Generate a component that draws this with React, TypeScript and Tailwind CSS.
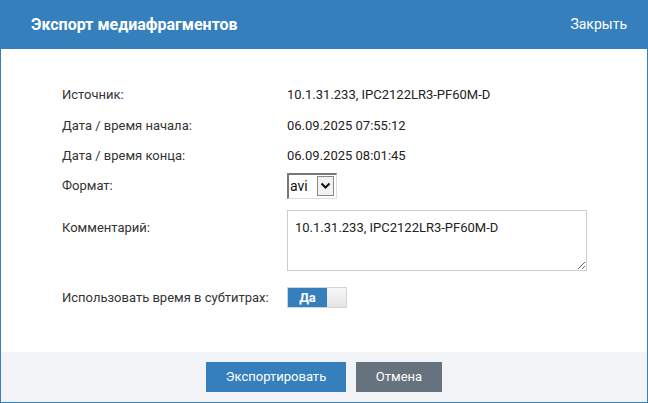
import React from "react";

const rows = [
  { label: "Источник:", value: "10.1.31.233, IPC2122LR3-PF60M-D", h: "h-[30px]" },
  { label: "Дата / время начала:", value: "06.09.2025 07:55:12", h: "h-[31px]" },
  { label: "Дата / время конца:", value: "06.09.2025 08:01:45", h: "h-[30px]" },
];

export default function App() {
  return (
    <div
      className="w-[648px] h-[403px] border border-[#367fbd] flex flex-col bg-white text-[13px] text-[#333]"
      style={{ fontFamily: "Roboto, 'Liberation Sans', sans-serif" }}
    >
      {/* header */}
      <div className="h-[49px] -mt-px -mx-px bg-[#367fbd] flex items-center justify-between pl-[31px] pr-[21px]">
        <h1 className="text-white text-[16px] font-bold">Экспорт медиафрагментов</h1>
        <span className="text-white text-[14px]">Закрыть</span>
      </div>

      {/* body */}
      <div className="flex-1 pt-[31px] pl-[61px]">
        {rows.map((r) => (
          <div key={r.label} className={`flex items-center ${r.h}`}>
            <div className="w-[225px]">{r.label}</div>
            <div className="text-[#222]">{r.value}</div>
          </div>
        ))}

        <div className="flex h-[30px] items-center">
          <div className="w-[225px]">Формат:</div>
          <div className="flex h-[26px] w-[50px] border-t-2 border-l-2 border-t-[#777] border-l-[#777] border-r border-b border-r-[#ddd] border-b-[#ddd] bg-white">
            <span className="flex-1 pl-[1px] leading-[23px] text-[14px] text-[#111]">avi</span>
            <span className="w-[17px] h-[20px] mt-[1px] mr-[2px] border border-[#888] bg-[#f2f2f2] flex items-center justify-center">
              <svg width="11" height="8" viewBox="0 0 11 8">
                <path d="M1.5 1.5 L5.5 5.5 L9.5 1.5" stroke="#111" strokeWidth="2" fill="none" />
              </svg>
            </span>
          </div>
        </div>

        <div className="flex mt-[9px]">
          <div className="w-[225px] pt-[8px]">Комментарий:</div>
          <textarea
            defaultValue="10.1.31.233, IPC2122LR3-PF60M-D"
            className="w-[300px] h-[61px] border border-[#ccc] px-[7px] pt-[9px] text-[13px] text-[#222] leading-[16px] outline-none"
            style={{ fontFamily: "Roboto, 'Liberation Sans', sans-serif" }}
          />
        </div>

        <div className="flex items-center mt-[16px] h-[21px]">
          <div className="w-[225px]">Использовать время в субтитрах:</div>
          <div className="flex h-[21px] w-[60px] border border-[#d4d4d4]">
            <span className="w-[39px] bg-[#367fbd] text-white font-bold text-[13px] flex items-center justify-center">
              Да
            </span>
            <span className="flex-1 bg-gradient-to-b from-[#f7f7f7] to-[#e4e4e4]" />
          </div>
        </div>
      </div>

      {/* footer */}
      <div className="h-[50px] bg-[#f1f3f7] flex items-center justify-center gap-[10px]">
        <button className="w-[140px] h-[30px] bg-[#367fbd] text-white text-[13px]">Экспортировать</button>
        <button className="w-[86px] h-[30px] bg-[#66737e] text-white text-[13px]">Отмена</button>
      </div>
    </div>
  );
}
